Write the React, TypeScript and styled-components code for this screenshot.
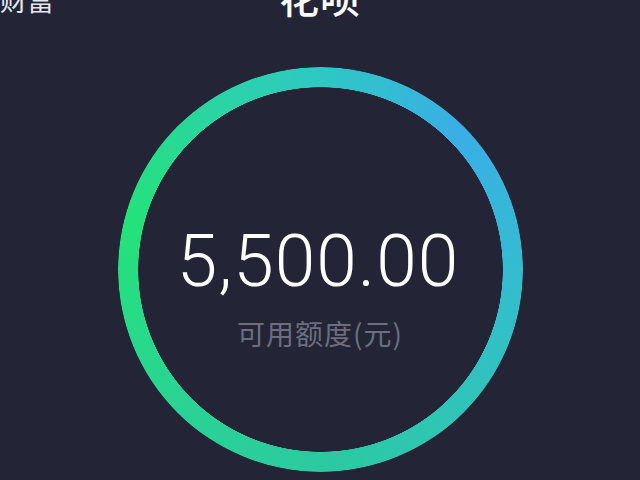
import React from "react";
import styled, { createGlobalStyle } from "styled-components";

const Global = createGlobalStyle`
  html, body { margin: 0; padding: 0; background: #232536; }
  body { width: 640px; height: 480px; overflow: hidden; }
  #root { width: 640px; height: 480px; }
`;

const Page = styled.div`
  width: 640px;
  height: 480px;
  background: #232536;
  display: flex;
  flex-direction: column;
  align-items: center;
  overflow: hidden;
  font-family: "Noto Sans CJK SC", "Noto Sans", sans-serif;
`;

const Header = styled.div`
  width: 100%;
  height: 40px;
  margin-top: -24px;
  display: grid;
  grid-template-columns: 1fr auto 1fr;
  align-items: end;
`;

const Back = styled.span`
  justify-self: start;
  margin-left: 0px;
  font-size: 27px;
  line-height: 27px;
  color: #e6e7ee;
  font-weight: 400;
  margin-bottom: 3px;
`;

const Title = styled.span`
  font-size: 40px;
  line-height: 40px;
  color: #ffffff;
  font-weight: 500;
  letter-spacing: 1px;
`;

const Ring = styled.div`
  margin-top: 51px;
  width: 405px;
  height: 405px;
  flex-shrink: 0;
  border-radius: 50%;
  position: relative;
  display: flex;
  flex-direction: column;
  align-items: center;
  padding-top: 158px;
  box-sizing: border-box;
  &::before {
    content: "";
    position: absolute;
    inset: 0;
    border-radius: 50%;
    background: conic-gradient(
      #2ec8c4 0deg,
      #3aaee6 45deg,
      #34bcd0 90deg,
      #30c4b8 135deg,
      #2bcaa0 180deg,
      #2ad394 225deg,
      #24e27a 285deg,
      #2bd3a6 330deg,
      #2ec8c4 360deg
    );
    -webkit-mask: radial-gradient(farthest-side, transparent calc(100% - 20.5px), #000 calc(100% - 20px));
    mask: radial-gradient(farthest-side, transparent calc(100% - 20.5px), #000 calc(100% - 20px));
  }
`;

const Amount = styled.div`
  font-family: Roboto, "Liberation Sans", sans-serif;
  font-weight: 300;
  font-size: 73px;
  line-height: 73px;
  color: #ffffff;
  letter-spacing: 1px;
  margin-left: -4px;
`;

const Label = styled.div`
  margin-top: 21px;
  font-size: 28px;
  line-height: 28px;
  color: #6c6e7f;
  letter-spacing: 1px;
`;

export default function App() {
  return (
    <>
      <Global />
      <Page>
        <Header>
          <Back>财富</Back>
          <Title>花呗</Title>
          <span />
        </Header>
        <Ring>
          <Amount>5,500.00</Amount>
          <Label>可用额度(元)</Label>
        </Ring>
      </Page>
    </>
  );
}
